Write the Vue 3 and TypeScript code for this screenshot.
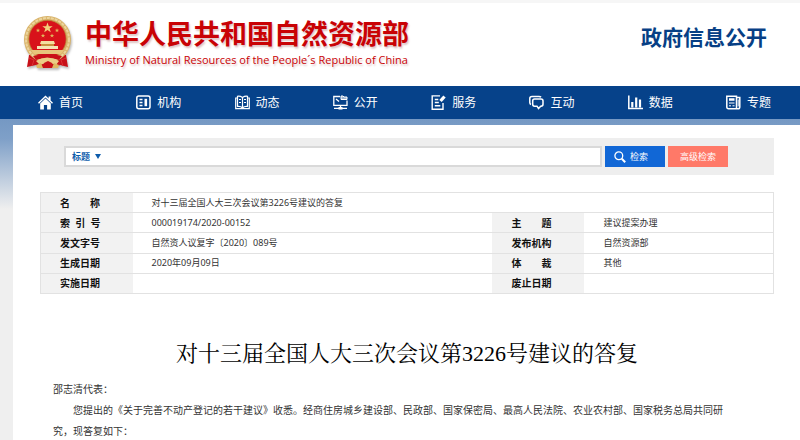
<script setup lang="ts">
import { ref } from 'vue'

interface NavItem {
  label: string
  icon: string
}

interface Field {
  label: string
  value: string
}

const navItems: NavItem[] = [
  { label: '首页', icon: 'home' },
  { label: '机构', icon: 'org' },
  { label: '动态', icon: 'book' },
  { label: '公开', icon: 'screen' },
  { label: '服务', icon: 'service' },
  { label: '互动', icon: 'chat' },
  { label: '数据', icon: 'chart' },
  { label: '专题', icon: 'news' },
]

const title = '对十三届全国人大三次会议第3226号建议的答复'

const rows: Field[][] = [
  [{ label: '名\u3000\u3000称', value: title }],
  [
    { label: '索\u00a0\u00a0引\u00a0\u00a0号', value: '000019174/2020-00152' },
    { label: '主\u3000\u3000题', value: '建议提案办理' },
  ],
  [
    { label: '发文字号', value: '自然资人议复字〔2020〕089号' },
    { label: '发布机构', value: '自然资源部' },
  ],
  [
    { label: '生成日期', value: '2020年09月09日' },
    { label: '体\u3000\u3000裁', value: '其他' },
  ],
  [
    { label: '实施日期', value: '' },
    { label: '废止日期', value: '' },
  ],
]

const scope = ref('标题')
const keyword = ref('')
</script>

<template>
  <div class="page">
    <header class="header">
      <a class="brand" href="#">
        <svg class="emblem" viewBox="0 0 50 54" aria-hidden="true">
          <path d="M6 40 L4 52 L13 50 L18 53 L32 53 L37 50 L45 52 L43 40 Z" fill="#c81018" />
          <circle cx="24.500" cy="24.500" r="23.500" fill="#d9b36a" />
          <circle cx="24.500" cy="24.500" r="21.500" fill="none" stroke="#ecd59c" stroke-width="2" stroke-dasharray="3 1" />
          <circle cx="24.500" cy="24" r="18.700" fill="#d8121a" stroke="#b98a3c" stroke-width="0.800" />
          <path d="M24.500 7.500l1.300 3.700h3.900l-3.100 2.400 1.200 3.700-3.300-2.200-3.300 2.200 1.200-3.700-3.100-2.400h3.900z" fill="#f2d07c" />
          <g fill="#e2b55c">
            <path d="M15 13.200l.6 1.500h1.600l-1.300 1 .5 1.500-1.400-.9-1.400.9.500-1.500-1.300-1h1.600z" />
            <path d="M34 13.200l.6 1.500h1.600l-1.300 1 .5 1.500-1.400-.9-1.400.9.500-1.500-1.300-1h1.600z" />
            <path d="M20 18.500l.6 1.500h1.600l-1.300 1 .5 1.500-1.400-.9-1.400.9.500-1.500-1.300-1h1.600z" />
            <path d="M29 18.500l.6 1.500h1.600l-1.300 1 .5 1.500-1.400-.9-1.400.9.500-1.500-1.300-1h1.600z" />
          </g>
          <path d="M18 26h13l1 3H17z" fill="#f3df9f" />
          <rect x="18" y="29" width="13" height="2" fill="#c8923e" />
          <path d="M14 31h21v3H14z" fill="#f5e5b4" />
          <path d="M8 35h33l-3 4H11z" fill="#e7c57b" />
          <path d="M10 41q14-4 29 0l-3 4q-11-4-23 0z" fill="#c81018" />
          <path d="M13 46q11-7 23 0l-3 4-8-3-8 3z" fill="#ebcd86" />
          <path d="M21 48l4-2 4 2-1 4h-6z" fill="#c81018" />
          <path d="M13 50l5-2 2 5h-6zM36 50l-5-2-2 5h6z" fill="#dfb862" />
          <path d="M6 43l5 2-2 6M43 43l-5 2 2 6" fill="none" stroke="#dc3034" stroke-width="1" />
        </svg>
        <span class="brand-text">
          <span class="brand-cn">中华人民共和国自然资源部</span>
          <span class="brand-en">Ministry of Natural Resources of the People´s Republic of China</span>
        </span>
      </a>
      <h2 class="channel">政府信息公开</h2>
    </header>

    <nav class="nav">
      <a v-for="item in navItems" :key="item.icon" class="nav-item" href="#">
        <svg class="nav-icon" viewBox="0 0 15 15" aria-hidden="true">
          <g v-if="item.icon === 'home'" fill="#fff">
            <path d="M7.500 0.500L0 7.800l1 1 6.500-6.200L14 8.800l1-1-2.400-2.400V1.500h-2v2z" />
            <path d="M7.500 3.600L2.200 8.600v5.900h3.700V10h3.200v4.500h3.700V8.600z" />
          </g>
          <g v-else-if="item.icon === 'org'" fill="none" stroke="#fff">
            <rect x="0.800" y="1" width="13.200" height="12.800" rx="2" stroke-width="1.500" />
            <path d="M3.500 4.500h3M3.500 7.500h3M3.500 10.500h3" stroke-width="1.300" />
            <path d="M9.800 3.800v7.400" stroke-width="2.600" />
          </g>
          <g v-else-if="item.icon === 'book'" fill="none" stroke="#fff" stroke-width="1.200">
            <path d="M7.500 2.500Q5 0.800 2.500 1.300V11.500Q5.500 11 7.500 13 9.500 11 12.500 11.500V1.300Q10 0.800 7.500 2.500V13" />
            <path d="M2.500 3H0.700V13.700H14.300V3H12.500M4 4.500h2M4 7.500h2M9 4.500h2M9 7.500h2" />
          </g>
          <g v-else-if="item.icon === 'screen'" fill="none" stroke="#fff" stroke-width="1.300">
            <path d="M7 1.500H0.800V10.300H14V5.500M7.500 10.500v2.500M1 13.300h13M3 4l3 2.500" />
            <path d="M8 4.500V1h2l1 1h3v2.500z" fill="#fff" fill-opacity="0.600" stroke-width="1" />
            <path d="M5.500 13.300h4" stroke-width="2.500" />
          </g>
          <g v-else-if="item.icon === 'service'" fill="none" stroke="#fff" stroke-width="1.400">
            <path d="M9 0.900H1.200V14.200H12V8M3.800 4.500h3.500M3.800 7.500h4M3.800 10.800h5.500" />
            <path d="M9.500 6L13.500 1.500" stroke-width="3.200" />
          </g>
          <g v-else-if="item.icon === 'chat'" fill="none" stroke="#fff" stroke-width="1.500">
            <path d="M2 9.500Q0.800 9 0.800 7.500V3.500Q0.800 1.500 3 1.500H10Q11.500 1.500 12 2.200" />
            <path d="M5.500 4H12Q14 4 14 6V9.300Q14 11.200 12 11.200H11.700L9.500 13.500 8 11.200H5.500Q3.700 11.200 3.700 9.300V6Q3.700 4 5.500 4z" />
          </g>
          <g v-else-if="item.icon === 'chart'" fill="none" stroke="#fff">
            <path d="M0.800 0.500V13.500H15" stroke-width="1.500" />
            <path d="M4.300 7v5.500M8.200 2.500v10M12 4.500v8" stroke-width="2.200" />
          </g>
          <g v-else fill="none" stroke="#fff" stroke-width="1.500">
            <path d="M10.500 13.800H2.500Q0.800 13.800 0.800 12V1.200H10.500zM10.500 2.500H13.800V12Q13.800 13.800 12 13.800H10.500" />
            <path d="M3 4.500h5.500" stroke-width="2.500" />
            <path d="M3 8h5.500M3 10.800h2M6.500 10.800h2M12.200 4.500v7" stroke-width="1" />
          </g>
        </svg>
        <span>{{ item.label }}</span>
      </a>
    </nav>

    <div class="backdrop">
      <main class="panel">
        <form class="search" @submit.prevent>
          <div class="search-box">
            <div class="scope">
              <select v-model="scope" aria-label="检索范围">
                <option>标题</option>
                <option>正文</option>
              </select>
              <svg viewBox="0 0 6 5" aria-hidden="true"><path d="M0 0h6L3 5z" fill="#0d5cab" /></svg>
            </div>
            <input v-model="keyword" type="text" aria-label="检索词" />
          </div>
          <button class="btn primary" type="submit">
            <svg viewBox="0 0 12 12" aria-hidden="true">
              <circle cx="4.800" cy="4.800" r="3.900" fill="none" stroke="#fff" stroke-width="1.300" />
              <path d="M7.800 7.800l3.400 3.400" stroke="#fff" stroke-width="2" />
            </svg>
            检索
          </button>
          <button class="btn advanced" type="button">高级检索</button>
        </form>

        <table class="info">
          <colgroup>
            <col class="col-label" />
            <col />
            <col class="col-label" />
            <col class="col-side" />
          </colgroup>
          <tbody>
            <tr v-for="(row, index) in rows" :key="index">
              <template v-for="field in row" :key="field.label">
                <th scope="row">{{ field.label }}</th>
                <td :colspan="row.length === 1 ? 3 : 1">{{ field.value }}</td>
              </template>
            </tr>
          </tbody>
        </table>

        <article class="article">
          <h1>{{ title }}</h1>
          <div class="content">
            <p>邵志清代表：</p>
            <p class="indent">您提出的《关于完善不动产登记的若干建议》收悉。经商住房城乡建设部、民政部、国家保密局、最高人民法院、农业农村部、国家税务总局共同研究，现答复如下：</p>
          </div>
        </article>
      </main>
    </div>
  </div>
</template>

<style>
html {
  scrollbar-width: none;
}

body {
  margin: 0;
  background: #efefef;
}
</style>

<style scoped>
.page {
  font-family: 'Noto Sans', 'Noto Sans CJK SC', sans-serif;
  font-size: 10px;
  color: #333;
}

.page * {
  box-sizing: border-box;
}

a {
  color: inherit;
  text-decoration: none;
}

.header {
  display: flex;
  justify-content: space-between;
  height: 86px;
  padding: 12px 33px 0 23px;
  border-top: 3px solid #f6f6f6;
  background: #fff;
}

.brand {
  display: flex;
  gap: 12px;
  color: #c90205;
}

.emblem {
  width: 50px;
  height: 54px;
  filter: drop-shadow(1px 2px 1px #bbb);
}

.brand-text {
  display: flex;
  flex-direction: column;
  text-shadow: 1px 2px 2px #ddc4c4;
  white-space: nowrap;
}

.brand-cn {
  font-size: 27px;
  font-weight: 700;
  line-height: 38px;
}

.brand-en {
  font-family: 'Open Sans', sans-serif;
  font-size: 11px;
  line-height: 14px;
}

.channel {
  margin: 6px 0 0;
  font-size: 21px;
  font-weight: 700;
  line-height: 32px;
  color: #073f85;
}

.nav {
  display: flex;
  align-items: center;
  justify-content: space-between;
  height: 33px;
  padding: 0 29px 0 38px;
  background: #06428a;
}

.nav-item {
  display: flex;
  align-items: center;
  gap: 6px;
  font-size: 12px;
  line-height: 18px;
  color: #fff;
}

.nav-icon {
  width: 15px;
  height: 15px;
}

.backdrop {
  padding: 6px 0 0 13px;
  background: linear-gradient(#7598c3, #7fa0c8 20px, #efefef 90px);
}

.panel {
  min-height: 315px;
  padding: 13px 26px 0 27px;
  background: #fff;
}

.search {
  display: flex;
  gap: 3px;
  height: 37px;
  padding: 8px 46px 8px 24px;
  background: #eee;
}

.search-box {
  display: flex;
  flex: 1;
  min-width: 0;
  padding-left: 6px;
  border: 2px solid #d9d9d9;
  background: #fff;
}

.scope {
  display: grid;
  align-items: center;
}

.scope select,
.scope svg {
  grid-area: 1 / 1;
}

.scope select {
  padding: 0 10px 0 0;
  border: 0;
  appearance: none;
  background: none;
  font: 700 9px 'Noto Sans CJK SC', sans-serif;
  color: #0d5cab;
}

.scope svg {
  justify-self: end;
  width: 6px;
  height: 5px;
  pointer-events: none;
}

.search-box input {
  flex: 1;
  min-width: 0;
  border: 0;
  outline: 0;
  background: none;
  font: inherit;
}

.btn {
  display: flex;
  align-items: center;
  justify-content: center;
  gap: 4px;
  width: 60px;
  padding: 0;
  border: 0;
  font: 9px 'Noto Sans CJK SC', sans-serif;
  color: #fff;
}

.btn svg {
  width: 12px;
  height: 12px;
}

.primary {
  padding-right: 8px;
  background: #1167d6;
}

.advanced {
  background: #ff7968;
}

.info {
  width: 100%;
  height: 102px;
  margin-top: 17px;
  border-collapse: collapse;
  table-layout: fixed;
  border: 1px solid #e2e2e2;
}

.col-label {
  width: 92px;
}

.col-side {
  width: 189px;
}

.info th,
.info td {
  height: 20px;
  padding: 0 0 0 19px;
  border-top: 1px solid #e2e2e2;
  line-height: 18px;
  text-align: left;
  white-space: nowrap;
}

.info th {
  background: #f2f2f2;
  font-size: 10px;
  font-weight: 700;
  color: #111;
}

.info td {
  font-size: 9px;
}

.article h1 {
  margin: 44px 0 9px;
  font-family: 'Liberation Serif', 'Noto Serif CJK SC', 'Noto Sans CJK SC', serif;
  font-size: 22px;
  font-weight: 400;
  line-height: 32px;
  text-align: center;
  color: #000;
}

.content {
  padding: 0 46px 0 13px;
}

.content p {
  margin: 0;
  line-height: 21px;
}

.content .indent {
  text-indent: 2em;
}
</style>
